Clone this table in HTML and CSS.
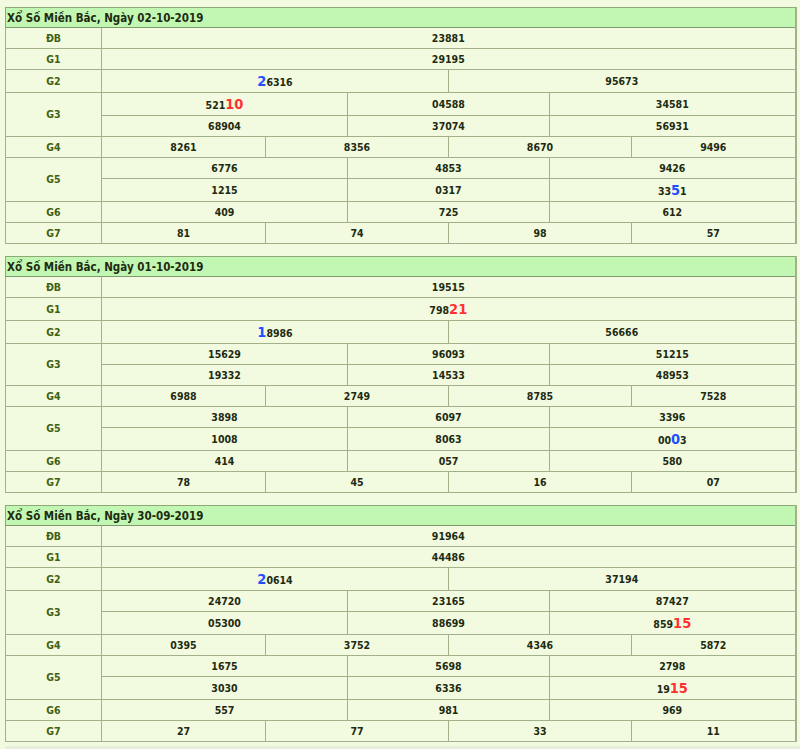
FILE: index.html
```html
<!DOCTYPE html>
<html lang="vi">
<head>
<meta charset="utf-8">
<title>Xổ Số Miền Bắc</title>
<link rel="stylesheet" href="styles.css">
</head>
<body>
<table class="kq">
  <colgroup><col class="c0"><col class="c1"><col class="c2"><col class="c3"><col class="c4"><col class="c5"><col class="c6"></colgroup>
  <tr><th class="title" colspan="7">Xổ Số Miền Bắc, Ngày 02-10-2019</th></tr>
  <tr><td class="lb">ĐB</td><td colspan="6">23881</td></tr>
  <tr><td class="lb">G1</td><td colspan="6">29195</td></tr>
  <tr><td class="lb">G2</td><td colspan="3"><span class="bl">2</span>6316</td><td colspan="3">95673</td></tr>
  <tr><td class="lb" rowspan="2">G3</td><td colspan="2">521<span class="rd">10</span></td><td colspan="2">04588</td><td colspan="2">34581</td></tr>
  <tr><td colspan="2">68904</td><td colspan="2">37074</td><td colspan="2">56931</td></tr>
  <tr><td class="lb">G4</td><td>8261</td><td colspan="2">8356</td><td colspan="2">8670</td><td>9496</td></tr>
  <tr><td class="lb" rowspan="2">G5</td><td colspan="2">6776</td><td colspan="2">4853</td><td colspan="2">9426</td></tr>
  <tr><td colspan="2">1215</td><td colspan="2">0317</td><td colspan="2">33<span class="bl">5</span>1</td></tr>
  <tr><td class="lb">G6</td><td colspan="2">409</td><td colspan="2">725</td><td colspan="2">612</td></tr>
  <tr><td class="lb">G7</td><td>81</td><td colspan="2">74</td><td colspan="2">98</td><td>57</td></tr>
</table>

<table class="kq">
  <colgroup><col class="c0"><col class="c1"><col class="c2"><col class="c3"><col class="c4"><col class="c5"><col class="c6"></colgroup>
  <tr><th class="title" colspan="7">Xổ Số Miền Bắc, Ngày 01-10-2019</th></tr>
  <tr><td class="lb">ĐB</td><td colspan="6">19515</td></tr>
  <tr><td class="lb">G1</td><td colspan="6">798<span class="rd">21</span></td></tr>
  <tr><td class="lb">G2</td><td colspan="3"><span class="bl">1</span>8986</td><td colspan="3">56666</td></tr>
  <tr><td class="lb" rowspan="2">G3</td><td colspan="2">15629</td><td colspan="2">96093</td><td colspan="2">51215</td></tr>
  <tr><td colspan="2">19332</td><td colspan="2">14533</td><td colspan="2">48953</td></tr>
  <tr><td class="lb">G4</td><td>6988</td><td colspan="2">2749</td><td colspan="2">8785</td><td>7528</td></tr>
  <tr><td class="lb" rowspan="2">G5</td><td colspan="2">3898</td><td colspan="2">6097</td><td colspan="2">3396</td></tr>
  <tr><td colspan="2">1008</td><td colspan="2">8063</td><td colspan="2">00<span class="bl">0</span>3</td></tr>
  <tr><td class="lb">G6</td><td colspan="2">414</td><td colspan="2">057</td><td colspan="2">580</td></tr>
  <tr><td class="lb">G7</td><td>78</td><td colspan="2">45</td><td colspan="2">16</td><td>07</td></tr>
</table>

<table class="kq">
  <colgroup><col class="c0"><col class="c1"><col class="c2"><col class="c3"><col class="c4"><col class="c5"><col class="c6"></colgroup>
  <tr><th class="title" colspan="7">Xổ Số Miền Bắc, Ngày 30-09-2019</th></tr>
  <tr><td class="lb">ĐB</td><td colspan="6">91964</td></tr>
  <tr><td class="lb">G1</td><td colspan="6">44486</td></tr>
  <tr><td class="lb">G2</td><td colspan="3"><span class="bl">2</span>0614</td><td colspan="3">37194</td></tr>
  <tr><td class="lb" rowspan="2">G3</td><td colspan="2">24720</td><td colspan="2">23165</td><td colspan="2">87427</td></tr>
  <tr><td colspan="2">05300</td><td colspan="2">88699</td><td colspan="2">859<span class="rd">15</span></td></tr>
  <tr><td class="lb">G4</td><td>0395</td><td colspan="2">3752</td><td colspan="2">4346</td><td>5872</td></tr>
  <tr><td class="lb" rowspan="2">G5</td><td colspan="2">1675</td><td colspan="2">5698</td><td colspan="2">2798</td></tr>
  <tr><td colspan="2">3030</td><td colspan="2">6336</td><td colspan="2">19<span class="rd">15</span></td></tr>
  <tr><td class="lb">G6</td><td colspan="2">557</td><td colspan="2">981</td><td colspan="2">969</td></tr>
  <tr><td class="lb">G7</td><td>27</td><td colspan="2">77</td><td colspan="2">33</td><td>11</td></tr>
</table>
<div class="foot"></div>
</body>
</html>
```

FILE: styles.css
```css
html, body {
  background: #f2fbdf;
}
body {
  margin: 7px 0 0 5px;
  font-family: "DejaVu Sans Condensed", "DejaVu Sans", sans-serif;
  font-stretch: condensed;
  color: #1e2a12;
}
.kq {
  width: 790px;
  table-layout: fixed;
  border-collapse: collapse;
  margin-bottom: 12px;
  border: 1px solid #a2b189;
  border-right: 2px solid #a2b189;
}
.c0 { width: 96px; }
.c1 { width: 164px; }
.c2 { width: 82px; }
.c3 { width: 101px; }
.c4 { width: 101px; }
.c5 { width: 82px; }
.c6 { width: 164px; }
.kq th.title {
  background: #c2f7b3;
  text-align: left;
  font-size: 11.5px;
  font-weight: bold;
  line-height: 14px;
  padding: 3px 0 2px 1px;
  color: #1d2a10;
  border: 1px solid #8fa878;
  border-bottom: 1px solid #7f9a6c;
}
.kq td {
  border: 1px solid #a2b189;
  text-align: center;
  font-size: 10.5px;
  font-weight: bold;
  line-height: 13px;
  padding: 3.5px 0 3.5px;
  color: #1e2a12;
}
.kq td.lb {
  color: #3f6012;
}
.bl, .rd {
  font-size: 14.5px;
  line-height: 15px;
}
.bl { color: #2050ff; }
.rd { color: #ff3030; }
.foot {
  height: 10px;
  margin-top: -8px;
  margin-left: -5px;
  background: linear-gradient(#e9eedd, #dfe4d2);
}
```
